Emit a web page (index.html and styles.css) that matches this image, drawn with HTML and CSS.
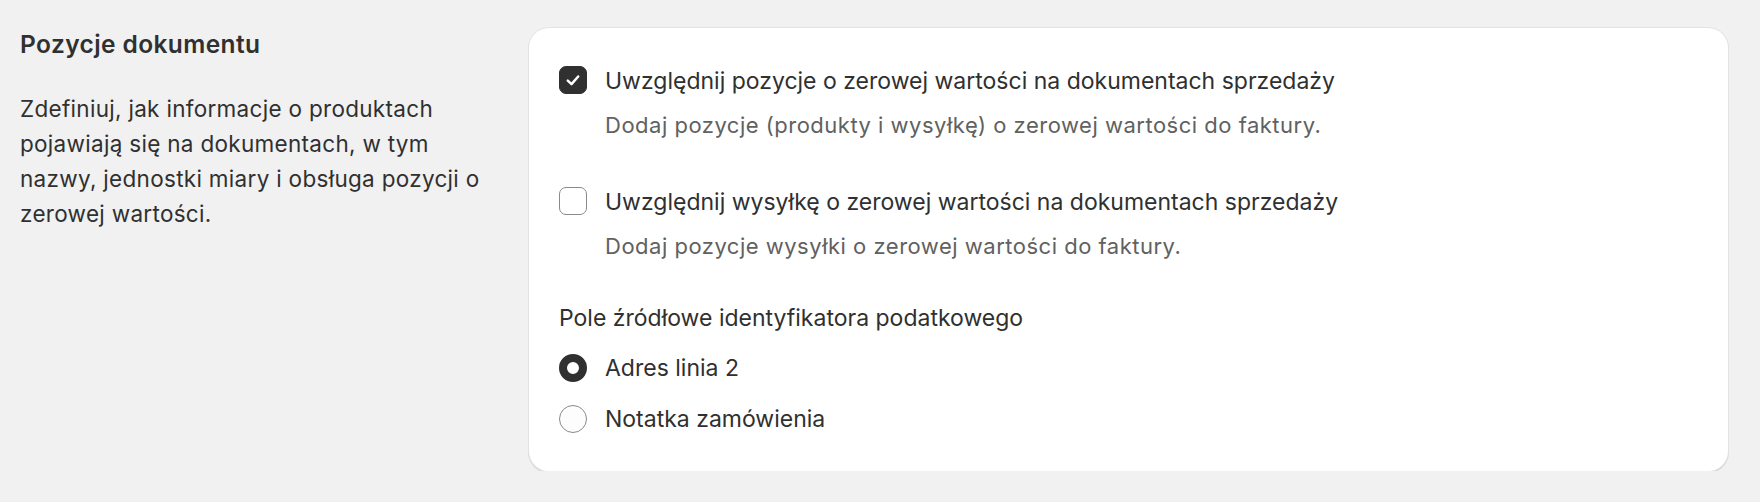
FILE: index.html
```html
<!DOCTYPE html>
<html lang="pl">
<head>
<meta charset="utf-8">
<title>Pozycje dokumentu</title>
<link rel="stylesheet" href="styles.css">
</head>
<body>
<div class="section">
  <div class="annotation">
    <h2 class="title">Pozycje dokumentu</h2>
    <p class="desc">Zdefiniuj, jak informacje o produktach pojawiają się na dokumentach, w tym nazwy, jednostki miary i obsługa pozycji o zerowej wartości.</p>
  </div>
  <div class="card">
    <label class="check-row">
      <span class="checkbox checked">
        <svg viewBox="0 0 20 20" width="20" height="20"><path d="M4.8 10.6 8.5 14.1 15.2 6.5" fill="none" stroke="#fff" stroke-width="2.5" stroke-linecap="round" stroke-linejoin="round"/></svg>
      </span>
      <span class="check-text">
        <span class="label">Uwzględnij pozycje o zerowej wartości na dokumentach sprzedaży</span>
        <span class="help">Dodaj pozycje (produkty i wysyłkę) o zerowej wartości do faktury.</span>
      </span>
    </label>
    <label class="check-row second">
      <span class="checkbox"></span>
      <span class="check-text">
        <span class="label">Uwzględnij wysyłkę o zerowej wartości na dokumentach sprzedaży</span>
        <span class="help">Dodaj pozycje wysyłki o zerowej wartości do faktury.</span>
      </span>
    </label>
    <div class="group">
      <div class="group-title">Pole źródłowe identyfikatora podatkowego</div>
      <label class="radio-row">
        <span class="radio checked"></span>
        <span class="label">Adres linia 2</span>
      </label>
      <label class="radio-row">
        <span class="radio"></span>
        <span class="label">Notatka zamówienia</span>
      </label>
    </div>
  </div>
</div>
</body>
</html>
```
FILE: styles.css
```css
html, body {
  margin: 0;
  padding: 0;
  background: #f1f1f1;
}
body {
  font-family: Inter, "Noto Sans", "Liberation Sans", sans-serif;
  color: #303030;
}
.section {
  display: flex;
  align-items: flex-start;
  padding: 28px 32px 0 20px;
  gap: 29px;
}
.annotation {
  width: 480px;
  flex: none;
}
.title {
  margin: 0;
  font-size: 24.5px;
  line-height: 32px;
  font-weight: 600;
  letter-spacing: 0.4px;
}
.desc {
  margin: 31px 0 0;
  font-size: 22.5px;
  line-height: 35px;
  letter-spacing: 0.3px;
}
.card {
  flex: 1;
  background: #fff;
  border-radius: 20px;
  box-shadow: 0 0 0 1px #e3e3e3, 0 1px 0 1px #d4d4d4, 0 2px 1px 0 rgba(0,0,0,0.06);
  padding: 35px 30px 35px 30px;
  height: 443px;
  box-sizing: border-box;
}
.check-row {
  display: flex;
  align-items: flex-start;
  gap: 18px;
}
.check-row.second {
  margin-top: 42px;
}
.checkbox {
  flex: none;
  width: 28px;
  height: 28px;
  margin-top: 3px;
  box-sizing: border-box;
  border-radius: 7px;
  border: 1.5px solid #8a8a8a;
  background: #fff;
  display: flex;
  align-items: center;
  justify-content: center;
}
.checkbox.checked {
  background: #303030;
  border-color: #303030;
}
.checkbox svg {
  width: 20px;
  height: 20px;
}
.check-text {
  display: flex;
  flex-direction: column;
}
.label {
  font-size: 23px;
  line-height: 36px;
}
.help {
  margin-top: 9px;
  font-size: 22px;
  line-height: 34px;
  letter-spacing: 0.5px;
  color: #616161;
}
.group {
  margin-top: 37px;
}
.group-title {
  font-size: 23px;
  line-height: 36px;
}
.radio-row {
  display: flex;
  align-items: center;
  gap: 18px;
  margin-top: 14px;
}
.radio-row + .radio-row {
  margin-top: 15px;
}
.radio {
  flex: none;
  width: 28px;
  height: 28px;
  box-sizing: border-box;
  border-radius: 50%;
  border: 1.3px solid #8a8a8a;
  background: #fdfdfd;
}
.radio.checked {
  border: 8.5px solid #303030;
  background: #fff;
}
```
